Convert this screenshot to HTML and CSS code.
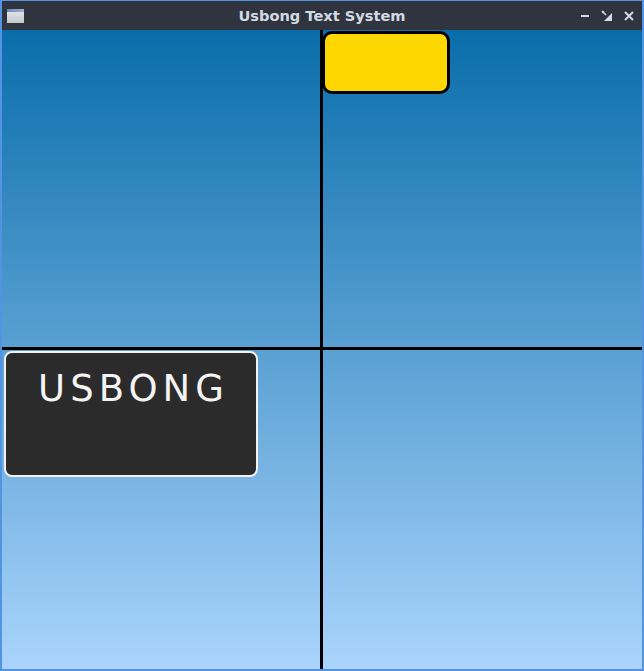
FILE: index.html
```html
<!DOCTYPE html>
<html>
<head>
<meta charset="utf-8">
<link rel="stylesheet" href="styles.css">
</head>
<body>
<div class="window">
  <div class="titlebar">
    <div class="tb-left"><div class="app-icon"><div class="app-icon-top"></div></div></div>
    <div class="title">Usbong Text System</div>
    <div class="controls">
      <svg class="ctl" width="12" height="12" viewBox="0 0 12 12"><rect x="2" y="5" width="8" height="2" fill="#d3dae3"/></svg>
      <svg class="ctl" width="12" height="12" viewBox="0 0 12 12"><polygon points="3,11 11,11 11,3" fill="#d3dae3"/><path d="M1 1 L5 5" stroke="#d3dae3" stroke-width="1.6"/><polygon points="1,1 3.5,1 1,3.5" fill="#d3dae3"/></svg>
      <svg class="ctl" width="12" height="12" viewBox="0 0 12 12"><path d="M2 2 L10 10 M10 2 L2 10" stroke="#d3dae3" stroke-width="2"/></svg>
    </div>
  </div>
  <div class="content">
    <div class="cell cell-tl"></div>
    <div class="cell cell-tr"><div class="yellow-box"></div></div>
    <div class="cell cell-bl"><div class="usbong-box"><span class="usbong-text">USBONG</span></div></div>
    <div class="cell cell-br"></div>
  </div>
</div>
</body>
</html>
```
FILE: styles.css
```css
html, body {
  margin: 0;
  padding: 0;
  background: #5294e2;
}
.window {
  width: 640px;
  height: 668px;
  border-style: solid;
  border-color: #5294e2;
  border-width: 1px 2px 2px 2px;
  display: flex;
  flex-direction: column;
  font-family: "DejaVu Sans", sans-serif;
}
.titlebar {
  height: 29px;
  background: #2f343f;
  display: grid;
  grid-template-columns: 1fr auto 1fr;
  align-items: center;
}
.tb-left {
  display: flex;
  align-items: center;
}
.app-icon {
  width: 17px;
  height: 14px;
  margin-left: 5px;
  background: linear-gradient(#e6e8ec, #c4c8cf);
  display: flex;
  flex-direction: column;
}
.app-icon-top {
  height: 3px;
  background: linear-gradient(90deg, #6f86b0, #9fb0cf);
}
.title {
  text-align: center;
  color: #d3dae3;
  font-weight: bold;
  font-size: 14.6px;
}
.controls {
  display: flex;
  justify-content: flex-end;
  gap: 10px;
  margin-right: 7px;
  align-items: center;
}
.ctl {
  display: block;
}
.content {
  flex: 1;
  display: grid;
  grid-template-columns: 321px 1fr;
  grid-template-rows: 320px 1fr;
  background: linear-gradient(#096daa, #aad4fc);
}
.cell-tl {
  border-right: 3px solid #000;
  border-bottom: 3px solid #000;
}
.cell-tr {
  border-bottom: 3px solid #000;
  padding: 1px 0 0 0;
}
.cell-bl {
  border-right: 3px solid #000;
  padding: 1px 0 0 2px;
}
.yellow-box {
  width: 122px;
  height: 57px;
  margin-left: -1px;
  background: #ffd700;
  border: 3px solid #000;
  border-radius: 10px;
}
.usbong-box {
  width: 250px;
  height: 122px;
  background: #2b2b2b;
  border: 2px solid #f2f2f2;
  border-radius: 8px;
  display: flex;
  justify-content: center;
  align-items: flex-start;
}
.usbong-text {
  color: #f4f4f4;
  font-size: 37px;
  letter-spacing: 5px;
  margin-top: 14px;
  padding-left: 5px;
  line-height: 1.2;
}
```
